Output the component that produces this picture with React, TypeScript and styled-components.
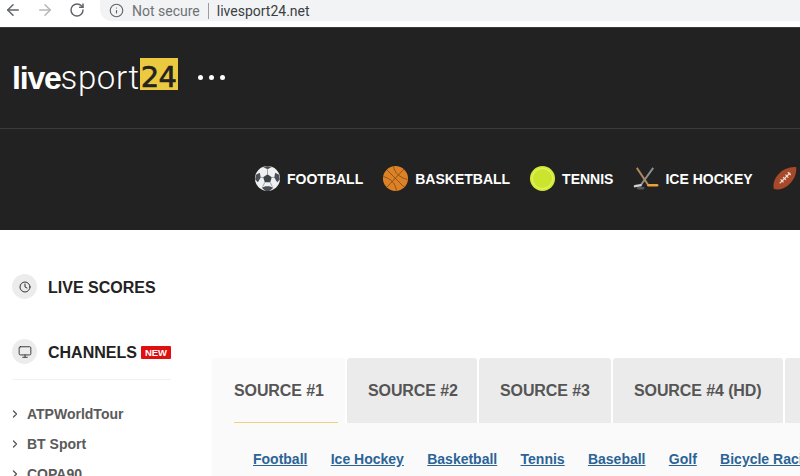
import styled, { createGlobalStyle } from 'styled-components';
import { ArrowLeft, ArrowRight, RotateCw, Info, Clock, Monitor, ChevronRight } from 'lucide-react';

const GlobalStyle = createGlobalStyle`
  html, body {
    margin: 0;
    padding: 0;
    width: 800px;
    height: 476px;
    overflow: hidden;
    background: #fff;
    font-family: "Liberation Sans", Arial, sans-serif;
  }
  * { box-sizing: border-box; }
`;

const Page = styled.div`
  width: 800px;
  height: 476px;
  overflow: hidden;
  display: flex;
  flex-direction: column;
`;

const BrowserBar = styled.div`
  height: 28px;
  flex: none;
  display: flex;
  align-items: flex-start;
  padding-left: 4px;
  background: #fff;
  border-bottom: 1px solid #3a3a3a;
`;

const NavButton = styled.div<{ $gap: number; $color: string }>`
  width: 18px;
  height: 20px;
  margin-right: ${p => p.$gap}px;
  display: flex;
  align-items: center;
  justify-content: center;
  color: ${p => p.$color};
`;

const AddressBar = styled.div`
  flex: 1;
  height: 24px;
  margin-left: 14px;
  margin-top: -3px;
  padding: 3px 0 0 9px;
  display: flex;
  align-items: center;
  background: #f1f3f4;
  border-radius: 0 0 0 12px;
  font-size: 14px;
  font-family: "Roboto", sans-serif;
`;

const NotSecure = styled.span`
  margin-left: 8px;
  color: #6f7275;
`;

const Divider = styled.span`
  width: 1px;
  height: 16px;
  margin: 0 8px 0 8px;
  background: #9a9c9e;
`;

const Url = styled.span`
  color: #3c4043;
`;

const Header = styled.header`
  height: 202px;
  flex: none;
  display: flex;
  flex-direction: column;
  background: #222;
`;

const TopRow = styled.div`
  height: 101px;
  flex: none;
  display: flex;
  align-items: center;
  padding: 0 0 1px 12px;
  border-bottom: 1px solid #3b3b3b;
`;

const Logo = styled.div`
  display: flex;
  align-items: center;
  height: 36px;
  color: #fff;
  font-size: 32px;
  line-height: 36px;
`;

const LogoBold = styled.span`
  font-family: "Liberation Sans", sans-serif;
  font-weight: 700;
  letter-spacing: -1.2px;
`;

const LogoThin = styled.span`
  font-family: "Roboto", sans-serif;
  font-size: 33px;
  font-weight: 300;
  letter-spacing: 0.6px;
`;

const LogoBadge = styled.span`
  height: 32px;
  margin-top: -7px;
  padding: 0 1px;
  background: #ecca3f;
  color: #222;
  font-family: "DejaVu Sans", sans-serif;
  font-size: 29px;
  font-weight: 400;
  line-height: 39px;
  letter-spacing: -0.5px;
  -webkit-text-stroke: 0.6px #222;
`;

const Dots = styled.div`
  display: flex;
  gap: 6px;
  margin-left: 20px;
`;

const Dot = styled.span`
  width: 5px;
  height: 5px;
  border-radius: 50%;
  background: #fff;
`;

const SportsRow = styled.nav`
  flex: 1;
  display: flex;
  align-items: center;
  padding: 0 0 2px 254px;
  white-space: nowrap;
  overflow: hidden;
`;

const Sport = styled.a<{ $gap: number }>`
  display: flex;
  flex: none;
  align-items: center;
  gap: 6px;
  margin-right: ${p => p.$gap}px;
  color: #fff;
  font-size: 14px;
  font-weight: 700;
`;

const SportIcon = styled.svg`
  width: 27px;
  height: 27px;
  flex: none;
`;

const Content = styled.div`
  flex: 1;
  display: flex;
  min-height: 0;
`;

const Sidebar = styled.aside`
  width: 212px;
  flex: none;
  padding: 44px 0 0 12px;
`;

const SideHeading = styled.div<{ $mb: number; $line?: boolean }>`
  width: 159px;
  height: ${p => (p.$line ? 41 : 27)}px;
  margin-bottom: ${p => p.$mb}px;
  display: flex;
  align-items: flex-start;
  white-space: nowrap;
  border-bottom: ${p => (p.$line ? '1px solid #f1f1f1' : 'none')};
  color: #222;
  font-size: 16px;
  font-weight: 700;
  line-height: 27px;
`;

const HeadingIcon = styled.span`
  width: 25px;
  height: 25px;
  margin-right: 11px;
  flex: none;
  display: flex;
  align-items: center;
  justify-content: center;
  border-radius: 50%;
  background: #ececec;
  color: #333;
`;

const NewBadge = styled.span`
  height: 13px;
  margin: 7px 0 0 4px;
  padding: 0 4px;
  border-radius: 1px;
  background: #e01010;
  color: #fff;
  font-size: 9.5px;
  line-height: 13px;
`;

const ChannelList = styled.ul`
  list-style: none;
  margin: 0;
  padding: 0;
`;

const Channel = styled.li`
  height: 30px;
  display: flex;
  align-items: center;
  color: #5a5a5a;
  font-size: 14px;
  font-weight: 700;
  line-height: 30px;
`;

const ChannelArrow = styled.span`
  width: 15px;
  display: flex;
  color: #555;
  margin-left: -3px;
  margin-right: 3px;
`;

const Main = styled.main`
  flex: 1;
  min-width: 0;
  padding-top: 128px;
  overflow: hidden;
`;

const Tabs = styled.div`
  display: flex;
  gap: 2px;
  height: 65px;
`;

const Tab = styled.div<{ $width: number; $active?: boolean }>`
  width: ${p => p.$width}px;
  flex: none;
  padding: 24px 0 0 ${p => (p.$active ? 22 : 21)}px;
  border-radius: 3px 3px 0 0;
  background: ${p => (p.$active ? '#fafafa' : '#ebebeb')};
  color: #555;
  font-size: 16px;
  font-weight: 700;
  letter-spacing: -0.1px;
  white-space: nowrap;
`;

const ActiveLine = styled.div`
  width: 104px;
  height: 1px;
  margin-top: 22px;
  background: #ecd27a;
`;

const Panel = styled.div`
  height: 53px;
  padding: 28px 0 0 41px;
  display: flex;
  background: #fafafa;
  white-space: nowrap;
`;

const SportLink = styled.a`
  flex: none;
  margin-right: 23.3px;
  color: #2a6496;
  font-size: 14px;
  font-weight: 700;
  text-decoration: underline;
`;

const Football = () => (
  <SportIcon viewBox="0 0 28 28">
    <circle cx="14" cy="14" r="13" fill="#eef0f2" />
    <polygon points="14,9.5 18.5,12.8 16.8,18 11.2,18 9.5,12.8" fill="#3d4248" />
    <path d="M9.5 2 14 4.5 18.5 2 14 1Z" fill="#4a4f55" />
    <path d="M2 10 6 8 7 13 4 18 1.2 15Z" fill="#4a4f55" />
    <path d="M26 10 22 8 21 13 24 18 26.8 15Z" fill="#4a4f55" />
    <path d="M8 23.5 12 22 16 22 20 23.5 16 27 12 27Z" fill="#4a4f55" />
    <path d="M14 4.5V9.5M9.5 12.8 7 13M18.5 12.8 21 13M11.2 18 9 22.5M16.8 18 19 22.5" stroke="#9aa0a6" strokeWidth="1" />
  </SportIcon>
);

const Basketball = () => (
  <SportIcon viewBox="0 0 28 28">
    <circle cx="14" cy="14" r="13" fill="#dd8127" />
    <g fill="none" stroke="#7a4616" strokeWidth="0.8">
      <path d="M5 5 23 23" />
      <path d="M23 4 5 23" />
      <path d="M12 1.5C13 8 18 13 26.5 15" />
      <path d="M1.5 12C9 14 14 19 15 26.5" />
    </g>
  </SportIcon>
);

const TennisBall = () => (
  <SportIcon viewBox="0 0 28 28">
    <circle cx="14" cy="14" r="13" fill="#d3ea34" />
    <circle cx="14" cy="14" r="10.5" fill="#cbe42e" stroke="#e2f060" strokeWidth="1.2" />
  </SportIcon>
);

const Hockey = () => (
  <SportIcon viewBox="0 0 28 28">
    <path d="M22 3 9 21" stroke="#8d8f91" strokeWidth="2" />
    <path d="M9 21 3 22" stroke="#cfd2d4" strokeWidth="2.4" strokeLinecap="round" />
    <path d="M5 3 17 21" stroke="#b08a5c" strokeWidth="2" />
    <path d="M17 21 H26" stroke="#e9a23b" strokeWidth="2.8" strokeLinecap="round" />
    <ellipse cx="9" cy="24" rx="4" ry="1.4" fill="#55585b" />
  </SportIcon>
);

const AmericanFootball = () => (
  <SportIcon viewBox="0 0 28 28">
    <path d="M3 25C0 14 12 1 26 2 28 14 15 28 3 25Z" fill="#a5492a" />
    <path d="M9 19 20 8" stroke="#f1ddd0" strokeWidth="1.3" />
    <path d="M10 15 13 18M12.5 12.5 15.5 15.5M15 10 18 13M17.5 7.5 20.5 10.5" stroke="#f1ddd0" strokeWidth="1.2" />
  </SportIcon>
);

const channels = ['ATPWorldTour', 'BT Sport', 'COPA90'];
const tabs = [
  { label: 'SOURCE #1', width: 133, active: true },
  { label: 'SOURCE #2', width: 130 },
  { label: 'SOURCE #3', width: 132 },
  { label: 'SOURCE #4 (HD)', width: 170 },
  { label: '', width: 60 },
];
const links = ['Football', 'Ice Hockey', 'Basketball', 'Tennis', 'Baseball', 'Golf', 'Bicycle Racing'];

export default function App() {
  return (
    <Page>
      <GlobalStyle />
      <BrowserBar>
        <NavButton $gap={14} $color="#5f6368"><ArrowLeft size={18} strokeWidth={2} /></NavButton>
        <NavButton $gap={14} $color="#b4b6b8"><ArrowRight size={18} strokeWidth={2} /></NavButton>
        <NavButton $gap={0} $color="#5f6368"><RotateCw size={16} strokeWidth={2.2} /></NavButton>
        <AddressBar>
          <Info size={15} color="#5f6368" strokeWidth={1.8} />
          <NotSecure>Not secure</NotSecure>
          <Divider />
          <Url>livesport24.net</Url>
        </AddressBar>
      </BrowserBar>
      <Header>
        <TopRow>
          <Logo>
            <LogoBold>live</LogoBold>
            <LogoThin>sport</LogoThin>
            <LogoBadge>24</LogoBadge>
          </Logo>
          <Dots><Dot /><Dot /><Dot /></Dots>
        </TopRow>
        <SportsRow>
          <Sport $gap={19}><Football />FOOTBALL</Sport>
          <Sport $gap={19}><Basketball />BASKETBALL</Sport>
          <Sport $gap={19}><TennisBall />TENNIS</Sport>
          <Sport $gap={18}><Hockey />ICE HOCKEY</Sport>
          <Sport $gap={0}><AmericanFootball /></Sport>
        </SportsRow>
      </Header>
      <Content>
        <Sidebar>
          <SideHeading $mb={38}>
            <HeadingIcon><Clock size={12} strokeWidth={2} /></HeadingIcon>
            LIVE SCORES
          </SideHeading>
          <SideHeading $mb={19} $line>
            <HeadingIcon><Monitor size={14} strokeWidth={1.6} /></HeadingIcon>
            CHANNELS
            <NewBadge>NEW</NewBadge>
          </SideHeading>
          <ChannelList>
            {channels.map(name => (
              <Channel key={name}>
                <ChannelArrow><ChevronRight size={12} strokeWidth={2.6} /></ChannelArrow>
                {name}
              </Channel>
            ))}
          </ChannelList>
        </Sidebar>
        <Main>
          <Tabs>
            {tabs.map(tab => (
              <Tab key={tab.width} $width={tab.width} $active={tab.active}>
                {tab.label}
                {tab.active && <ActiveLine />}
              </Tab>
            ))}
          </Tabs>
          <Panel>
            {links.map(link => (
              <SportLink key={link}>{link}</SportLink>
            ))}
          </Panel>
        </Main>
      </Content>
    </Page>
  );
}
